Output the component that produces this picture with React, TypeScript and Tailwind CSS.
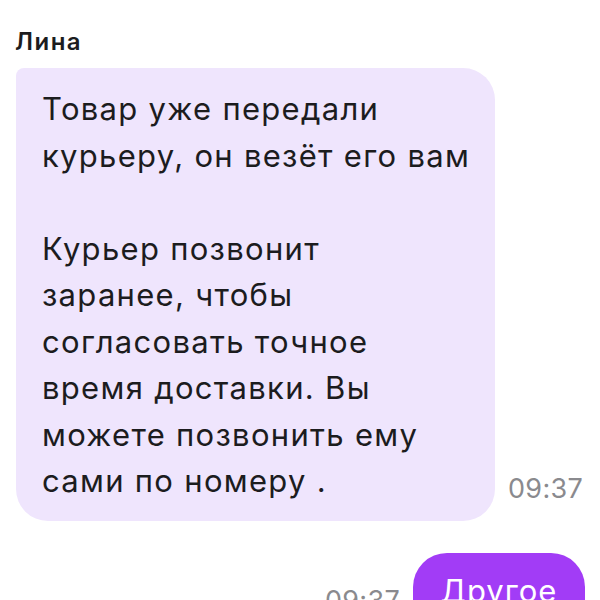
import React from 'react';

const lines: string[] = [
  'Товар уже передали',
  'курьеру, он везёт его вам',
  '',
  'Курьер позвонит',
  'заранее, чтобы',
  'согласовать точное',
  'время доставки. Вы',
  'можете позвонить ему',
  'сами по номеру .',
];

export default function App() {
  return (
    <div className="w-[600px] h-[600px] overflow-hidden bg-white text-[#1c1c1e] font-['Inter',sans-serif]">
      <div className="pl-[15px] pt-[28px] text-[24px] leading-[28px] font-semibold tracking-[1.5px]">Лина</div>

      {/* incoming message */}
      <div className="flex items-end mt-[12px] pl-4">
        <div className="w-[479px] bg-[#efe5fd] rounded-[32px] rounded-tl-[8px] pl-[26px] pr-2 pt-[18px] pb-4 text-[31px] leading-[46.5px] tracking-[1.3px]">
          {lines.map((l, i) => (
            <div key={i} className="h-[46.5px] whitespace-nowrap">{l}</div>
          ))}
        </div>
        <span className="ml-[13px] mb-[17px] text-[27px] leading-[30px] tracking-[0.3px] text-[#8a8a8e]">09:37</span>
      </div>

      {/* outgoing reply */}
      <div className="flex items-start justify-end mt-8 pr-[15px]">
        <span className="mt-[33px] mr-[13px] text-[27px] leading-[30px] tracking-[0.3px] text-[#8a8a8e]">09:37</span>
        <div className="w-[172px] h-[80px] bg-[#a23cf6] rounded-[34px] text-white text-[31px] leading-[36px] tracking-[1px] pt-[20px] text-center">
          Другое
        </div>
      </div>
    </div>
  );
}
